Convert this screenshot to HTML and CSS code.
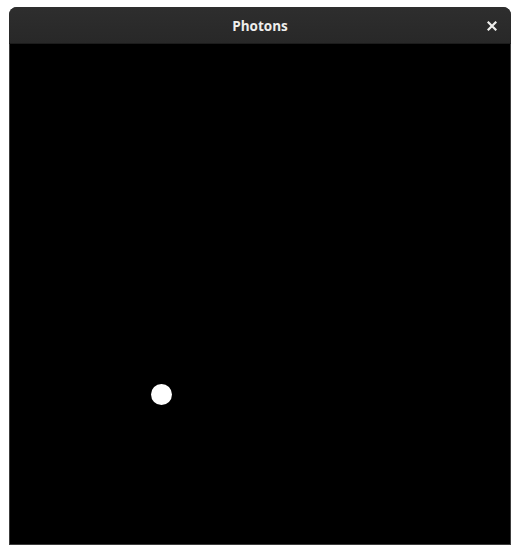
FILE: index.html
```html
<!DOCTYPE html>
<html>
<head>
<meta charset="utf-8">
<title>Photons</title>
<link rel="stylesheet" href="styles.css">
</head>
<body>
<div class="window">
  <div class="titlebar">
    <span class="title">Photons</span>
    <svg class="close" width="10" height="10" viewBox="0 0 10 10">
      <path d="M1.5 1.5 L8.5 8.5 M8.5 1.5 L1.5 8.5" stroke="#eeeeec" stroke-width="2.2" stroke-linecap="square"/>
    </svg>
  </div>
  <div class="canvas">
    <div class="photon"></div>
  </div>
</div>
</body>
</html>
```
FILE: styles.css
```css
html, body {
  margin: 0;
  padding: 0;
  background: #ffffff;
}
.window {
  margin: 7px 0 0 9px;
  width: 502px;
  height: 538px;
  display: flex;
  flex-direction: column;
  border-radius: 8px 8px 0 0;
  overflow: hidden;
  background: #2b2b2b;
}
.titlebar {
  height: 37px;
  flex: none;
  position: relative;
  display: flex;
  align-items: center;
  justify-content: center;
  padding-top: 1px;
  background: linear-gradient(#2e2e2e, #282828);
  border-bottom: 1px solid #1c1c1c;
  box-sizing: border-box;
}
.title {
  font-family: "Open Sans", "DejaVu Sans", sans-serif;
  font-weight: 700;
  font-size: 13.5px;
  color: #eeeeec;
}
.close {
  position: absolute;
  right: 14px;
  top: 14px;
}
.canvas {
  flex: 1;
  position: relative;
  background: #000000;
  border: 1px solid #3c3c3c;
  border-top: none;
}
.photon {
  position: absolute;
  left: 141px;
  top: 340px;
  width: 21px;
  height: 21px;
  border-radius: 50%;
  background: #ffffff;
}
```
